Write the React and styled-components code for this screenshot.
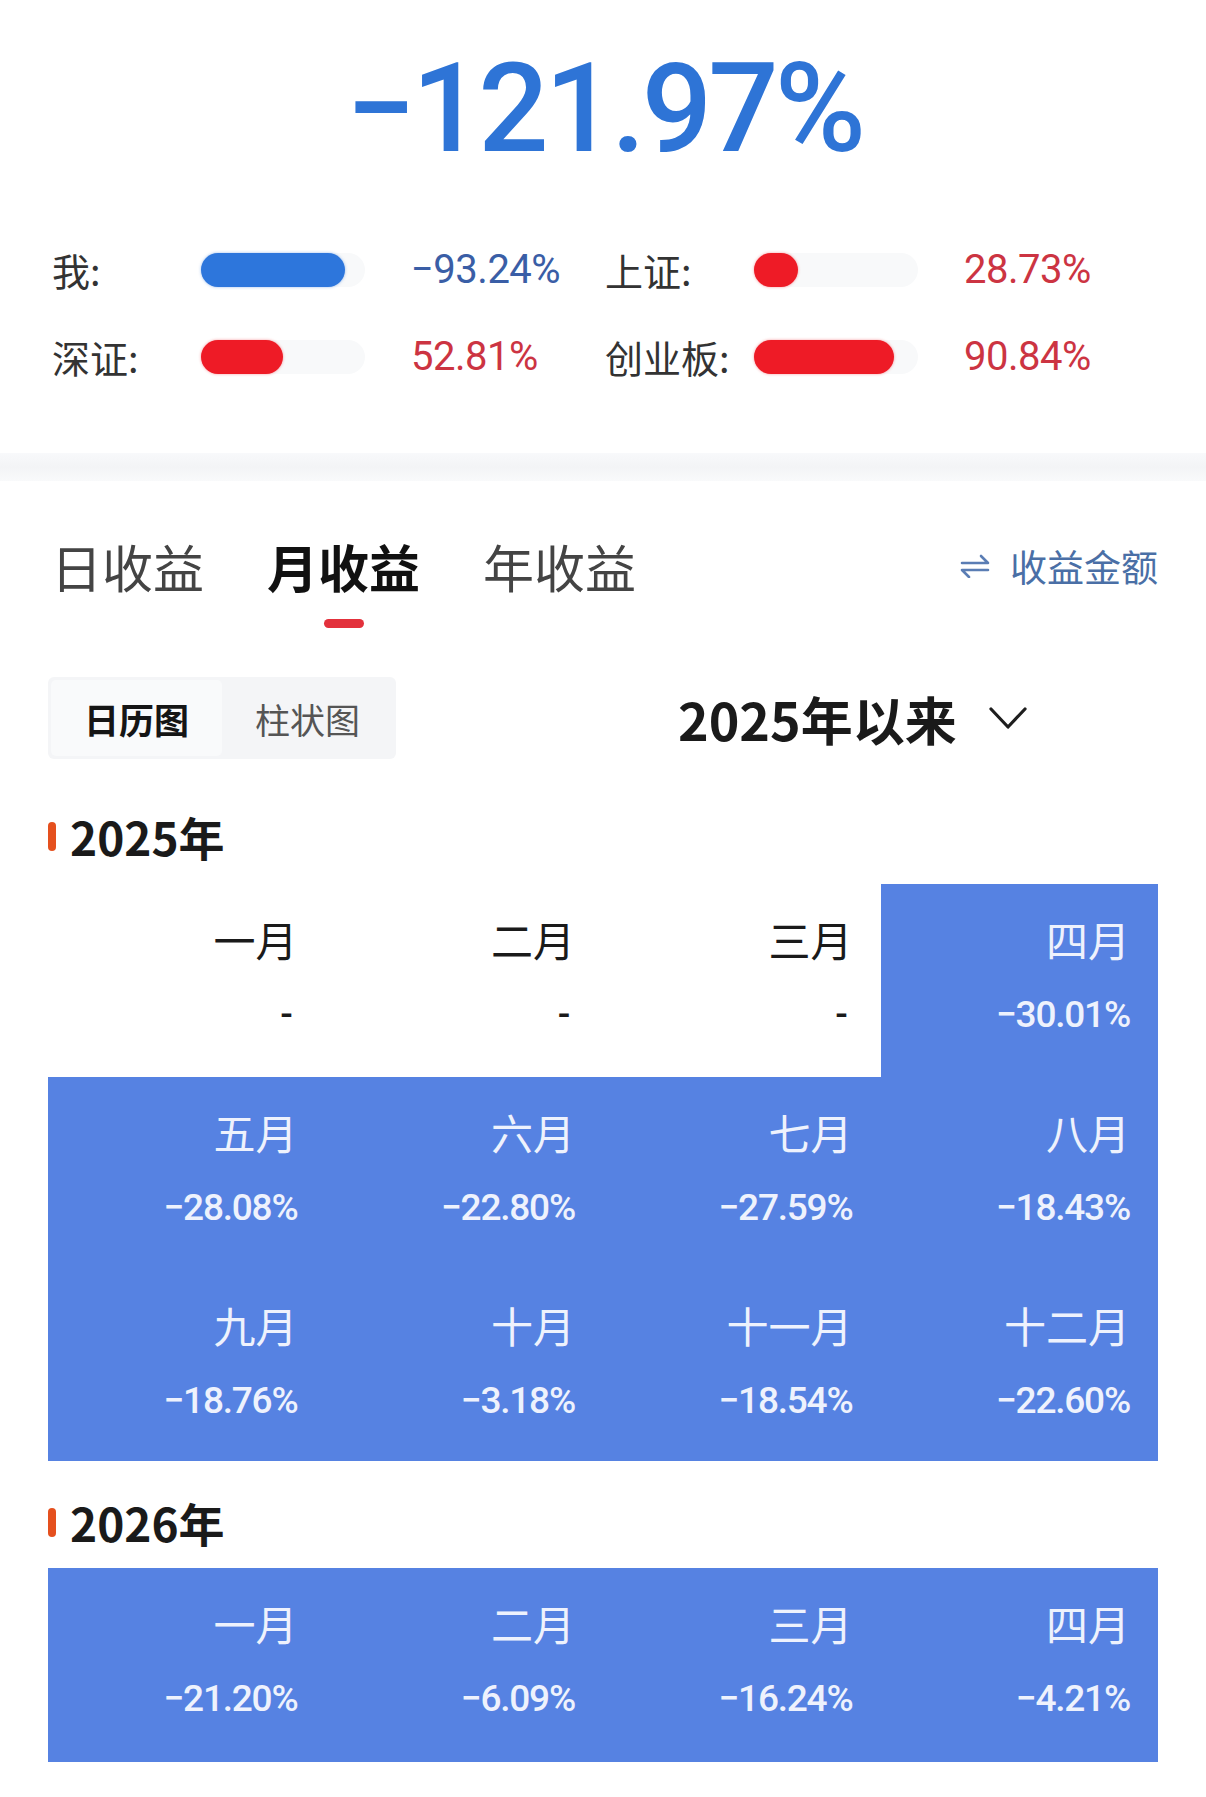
import React from 'react';
import styled, { createGlobalStyle } from 'styled-components';

const GlobalStyle = createGlobalStyle`
  body {
    margin: 0;
    background: #ffffff;
    font-family: "Noto Sans CJK SC", "Noto Sans", sans-serif;
    color: #222;
  }
`;

const NUM_FONT = `Roboto, "Noto Sans CJK SC", sans-serif`;

const Page = styled.div`
  width: 1206px;
  min-height: 1797px;
  background: #fff;
`;

const Summary = styled.div`
  height: 453px;
  padding-top: 42px;
  box-sizing: border-box;
`;

const Total = styled.div`
  font-family: ${NUM_FONT};
  font-size: 124px;
  line-height: 134px;
  font-weight: 500;
  letter-spacing: -4px;
  color: #2e74d6;
  text-align: center;
  padding-left: 2px;
`;

const CompareGrid = styled.div`
  display: grid;
  grid-template-columns: 553px 553px;
  margin: 50px 0 0 52px;
`;

const CompareItem = styled.div`
  display: flex;
  align-items: center;
  height: 87px;
`;

const CompareLabel = styled.div`
  width: 149px;
  font-size: 38px;
  color: #333;
  line-height: 1;
`;

const Track = styled.div`
  width: 164px;
  height: 34px;
  border-radius: 17px;
  background: #f8f9fa;
  display: flex;
`;

const Fill = styled.div`
  height: 100%;
  border-radius: 17px;
  background: ${p => (p.$tone === 'blue' ? '#2d76dc' : '#ee1b26')};
  box-shadow: 0 0 3px ${p => (p.$tone === 'blue' ? 'rgba(45,118,220,0.5)' : 'rgba(238,27,38,0.45)')};
`;

const CompareValue = styled.div`
  margin-left: 46px;
  font-family: ${NUM_FONT};
  font-size: 40px;
  letter-spacing: -0.5px;
  color: ${p => (p.$tone === 'blue' ? '#3a5ea6' : '#cc3442')};
`;

const Divider = styled.div`
  height: 28px;
  background: linear-gradient(#f8f9fb, #f3f4f6 50%, #f9fafb);
`;

const Detail = styled.div`
  padding: 0 48px;
`;

const TabsRow = styled.div`
  display: flex;
  align-items: flex-start;
  padding-top: 52px;
`;

const Tab = styled.div`
  display: flex;
  flex-direction: column;
  align-items: center;
  margin-right: 63px;
  margin-left: ${p => (p.$first ? '3px' : '0')};
`;

const TabText = styled.div`
  font-size: 51px;
  line-height: 66px;
  height: 66px;
  font-weight: ${p => (p.$active ? 700 : 400)};
  color: ${p => (p.$active ? '#111' : '#444')};
`;

const TabMark = styled.div`
  margin-top: 20px;
  width: 40px;
  height: 9px;
  border-radius: 5px;
  background: ${p => (p.$active ? '#e3313c' : 'transparent')};
`;

const SwitchMode = styled.div`
  margin-left: auto;
  display: flex;
  align-items: center;
  height: 66px;
  gap: 20px;
  font-size: 37px;
  color: #4a6fa6;
`;

const ControlRow = styled.div`
  display: flex;
  align-items: center;
  margin-top: 49px;
`;

const Segments = styled.div`
  display: flex;
  width: 348px;
  height: 82px;
  background: #f4f5f7;
  border-radius: 6px;
  padding: 3px;
  box-sizing: border-box;
`;

const Segment = styled.div`
  flex: 1;
  display: flex;
  align-items: center;
  justify-content: center;
  font-size: 35px;
  border-radius: 5px;
  font-weight: ${p => (p.$active ? 700 : 400)};
  color: ${p => (p.$active ? '#151515' : '#555')};
  background: ${p => (p.$active ? '#f9fafb' : 'transparent')};
`;

const RangePicker = styled.div`
  display: flex;
  align-items: center;
  margin-left: 282px;
  gap: 32px;
  font-size: 52px;
  font-weight: 700;
  color: #1a1a1a;
`;

const YearTitle = styled.div`
  display: flex;
  align-items: center;
  gap: 14px;
  height: 50px;
  margin-top: ${p => p.$top}px;
  font-size: 46px;
  font-weight: 700;
  color: #1a1a1a;
  &::before {
    content: '';
    width: 8px;
    height: 29px;
    border-radius: 4px;
    background: #e5501e;
  }
`;

const MonthGrid = styled.div`
  display: grid;
  grid-template-columns: repeat(4, 1fr);
  margin-top: ${p => p.$top}px;
`;

const Cell = styled.div`
  height: ${p => p.$h}px;
  box-sizing: border-box;
  padding: 30px 28px 0 0;
  text-align: right;
  background: ${p => (p.$filled ? '#5682e2' : '#fff')};
  color: ${p => (p.$filled ? '#eef2fd' : '#1a1a1a')};
`;

const MonthName = styled.div`
  font-size: 42px;
  line-height: 50px;
`;

const MonthValue = styled.div`
  margin-top: 31px;
  font-family: ${NUM_FONT};
  font-size: 37px;
  font-weight: 500;
  line-height: 40px;
  letter-spacing: -1.2px;
  padding-right: ${p => (p.$empty ? '6px' : '0')};
`;

const SwapIcon = () => (
  <svg width="30" height="24" viewBox="0 0 30 24" fill="none" stroke="#5a7db4" strokeWidth="2.6" strokeLinecap="round" strokeLinejoin="round">
    <path d="M2 9 H28 L21 2" />
    <path d="M28 16 H2 L9 23" />
  </svg>
);

const Chevron = () => (
  <svg width="38" height="24" viewBox="0 0 38 24" fill="none" stroke="#1e1e1e" strokeWidth="3.2" strokeLinecap="round" strokeLinejoin="round">
    <polyline points="2,3 19,21 36,3" />
  </svg>
);

const compare = [
  { label: '我:', fill: 144, tone: 'blue', value: '−93.24%' },
  { label: '上证:', fill: 44, tone: 'red', value: '28.73%' },
  { label: '深证:', fill: 82, tone: 'red', value: '52.81%' },
  { label: '创业板:', fill: 140, tone: 'red', value: '90.84%' },
];

const months2025 = [
  ['一月', '-'], ['二月', '-'], ['三月', '-'], ['四月', '−30.01%'],
  ['五月', '−28.08%'], ['六月', '−22.80%'], ['七月', '−27.59%'], ['八月', '−18.43%'],
  ['九月', '−18.76%'], ['十月', '−3.18%'], ['十一月', '−18.54%'], ['十二月', '−22.60%'],
];

const months2026 = [
  ['一月', '−21.20%'], ['二月', '−6.09%'], ['三月', '−16.24%'], ['四月', '−4.21%'],
];

const MonthCell = ({ name, value, h }) => {
  const empty = value === '-';
  return (
    <Cell $filled={!empty} $h={h}>
      <MonthName>{name}</MonthName>
      <MonthValue $empty={empty}>{value}</MonthValue>
    </Cell>
  );
};

const App = () => {
  return (
    <Page>
      <GlobalStyle />
      <Summary>
        <Total>−121.97%</Total>
        <CompareGrid>
          {compare.map(c => (
            <CompareItem key={c.label}>
              <CompareLabel>{c.label}</CompareLabel>
              <Track>
                <Fill $tone={c.tone} style={{ width: c.fill }} />
              </Track>
              <CompareValue $tone={c.tone}>{c.value}</CompareValue>
            </CompareItem>
          ))}
        </CompareGrid>
      </Summary>
      <Divider />
      <Detail>
        <TabsRow>
          <Tab $first>
            <TabText>日收益</TabText>
            <TabMark />
          </Tab>
          <Tab>
            <TabText $active>月收益</TabText>
            <TabMark $active />
          </Tab>
          <Tab>
            <TabText>年收益</TabText>
            <TabMark />
          </Tab>
          <SwitchMode>
            <SwapIcon />
            <span>收益金额</span>
          </SwitchMode>
        </TabsRow>

        <ControlRow>
          <Segments>
            <Segment $active>日历图</Segment>
            <Segment>柱状图</Segment>
          </Segments>
          <RangePicker>
            <span>2025年以来</span>
            <Chevron />
          </RangePicker>
        </ControlRow>

        <YearTitle $top={52}>2025年</YearTitle>
        <MonthGrid $top={23}>
          {months2025.map(([n, v], i) => (
            <MonthCell key={n} name={n} value={v} h={i < 8 ? 193 : 191} />
          ))}
        </MonthGrid>

        <YearTitle $top={36}>2026年</YearTitle>
        <MonthGrid $top={21}>
          {months2026.map(([n, v]) => (
            <MonthCell key={n} name={n} value={v} h={194} />
          ))}
        </MonthGrid>
      </Detail>
    </Page>
  );
};

export default App;
